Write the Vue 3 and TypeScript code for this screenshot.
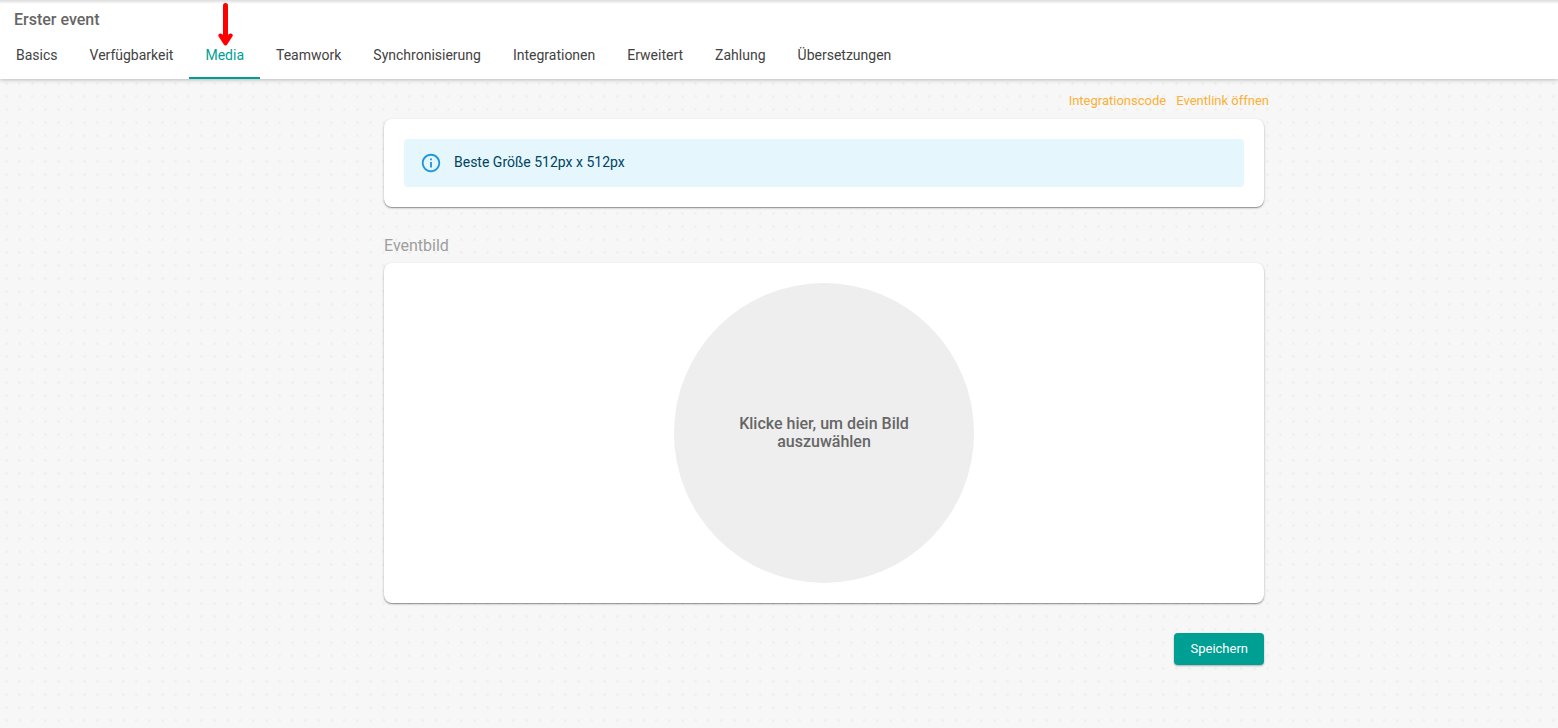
<script setup lang="ts">
import { ref } from 'vue'

const tabs: string[] = [
  'Basics',
  'Verfügbarkeit',
  'Media',
  'Teamwork',
  'Synchronisierung',
  'Integrationen',
  'Erweitert',
  'Zahlung',
  'Übersetzungen',
]
const active = ref('Media')
</script>

<template>
  <div class="page">
    <header class="header">
      <h1 class="title">Erster event</h1>
      <nav class="tabs">
        <a
          v-for="tab in tabs"
          :key="tab"
          href="#"
          class="tab"
          :class="{ active: tab === active }"
          @click.prevent="active = tab"
        >
          {{ tab }}
          <svg v-if="tab === 'Media'" class="arrow" width="18" height="44" viewBox="0 0 18 44" aria-hidden="true">
            <path d="M9.500 3.500V38" />
            <path d="M4.300 33.500L9.500 41.500L14.700 33.500L9.500 36.500Z" class="head" />
          </svg>
        </a>
      </nav>
    </header>

    <main class="main">
      <div class="content">
        <div class="links">
          <a href="#">Integrationscode</a>
          <a href="#">Eventlink öffnen</a>
        </div>

        <section class="card">
          <div class="info" role="note">
            <svg class="info-icon" width="22" height="22" viewBox="0 0 24 24" aria-hidden="true">
              <path
                fill="currentColor"
                d="M11 7h2v2h-2zm0 4h2v6h-2zm1-9C6.48 2 2 6.48 2 12s4.48 10 10 10 10-4.480 10-10S17.520 2 12 2zm0 18c-4.410 0-8-3.590-8-8s3.590-8 8-8 8 3.590 8 8-3.590 8-8 8z"
              />
            </svg>
            <span class="info-text">Beste Größe 512px x 512px</span>
          </div>
        </section>

        <h2 class="subtitle">Eventbild</h2>
        <section class="card">
          <button type="button" class="picker">Klicke hier, um dein Bild auszuwählen</button>
        </section>

        <div class="actions">
          <button type="button" class="save">Speichern</button>
        </div>
      </div>
    </main>
  </div>
</template>

<style>
body {
  background: #f7f7f7;
}
</style>

<style scoped>
.page {
  min-height: 100vh;
  box-sizing: border-box;
  font-family: Roboto, "Liberation Sans", sans-serif;
  background-color: #f7f7f7;
  background-image: radial-gradient(circle, #f0f0f0 1px, transparent 2px);
  background-size: 13px 13px;
  background-position: 0 -1px;
}

.header {
  position: relative;
  background: linear-gradient(#dcdcdc, #ffffff 4px);
  box-shadow: 0 1px 4px rgba(0, 0, 0, 0.25);
}

.title {
  margin: 0;
  padding: 10px 14px 0;
  font-size: 16px;
  line-height: 20px;
  font-weight: 500;
  color: #666666;
}

.tabs {
  display: flex;
}

.tab {
  position: relative;
  padding: 15px 16px 12px;
  border-bottom: 2px solid transparent;
  font-size: 14px;
  line-height: 20px;
  color: #424242;
  text-decoration: none;
}

.tab.active {
  color: #009f93;
  border-bottom-color: #009f93;
}

.arrow {
  position: absolute;
  left: 27px;
  top: -28px;
  fill: none;
  stroke: #ff0000;
  stroke-width: 5;
  stroke-linecap: round;
  stroke-linejoin: round;
}

.arrow .head {
  fill: #ff0000;
  stroke-width: 4;
}

.main {
  padding: 0 0 63px 90px;
}

.content {
  max-width: 890px;
  margin: 0 auto;
}

.links {
  display: flex;
  justify-content: flex-end;
  gap: 10px;
  padding: 13px 0 9px;
  font-size: 13px;
  line-height: 18px;
}

.links a {
  color: #fbb034;
  text-decoration: none;
}

.card {
  margin: 0 5px;
  padding: 20px;
  background: #ffffff;
  border-radius: 8px;
  box-shadow: 0 1px 1px rgba(0, 0, 0, 0.3), 0 1px 3px rgba(0, 0, 0, 0.2);
}

.info {
  display: flex;
  align-items: center;
  gap: 12px;
  padding: 13px 16px;
  border-radius: 4px;
  background: #e5f6fd;
  color: #014361;
  font-size: 14px;
  line-height: 20px;
}

.info-text {
  padding-bottom: 2px;
}

.info-icon {
  color: #1e96d9;
}

.subtitle {
  margin: 29px 5px 7px;
  font-size: 16px;
  line-height: 20px;
  font-weight: 400;
  color: #9e9e9e;
}

.picker {
  display: block;
  width: 300px;
  height: 300px;
  margin: 0 auto;
  padding: 0 50px;
  border: 0;
  border-radius: 50%;
  background: #eeeeee;
  color: #666666;
  font-family: inherit;
  font-size: 16px;
  font-weight: 500;
  line-height: 18px;
  cursor: pointer;
}

.actions {
  display: flex;
  justify-content: flex-end;
  margin: 30px 5px 0;
}

.save {
  padding: 7px 16px;
  border: 0;
  border-radius: 4px;
  background: #009f93;
  color: #ffffff;
  font-family: inherit;
  font-size: 13px;
  font-weight: 400;
  line-height: 18px;
  box-shadow: 0 1px 2px rgba(0, 0, 0, 0.3);
  cursor: pointer;
}
</style>
